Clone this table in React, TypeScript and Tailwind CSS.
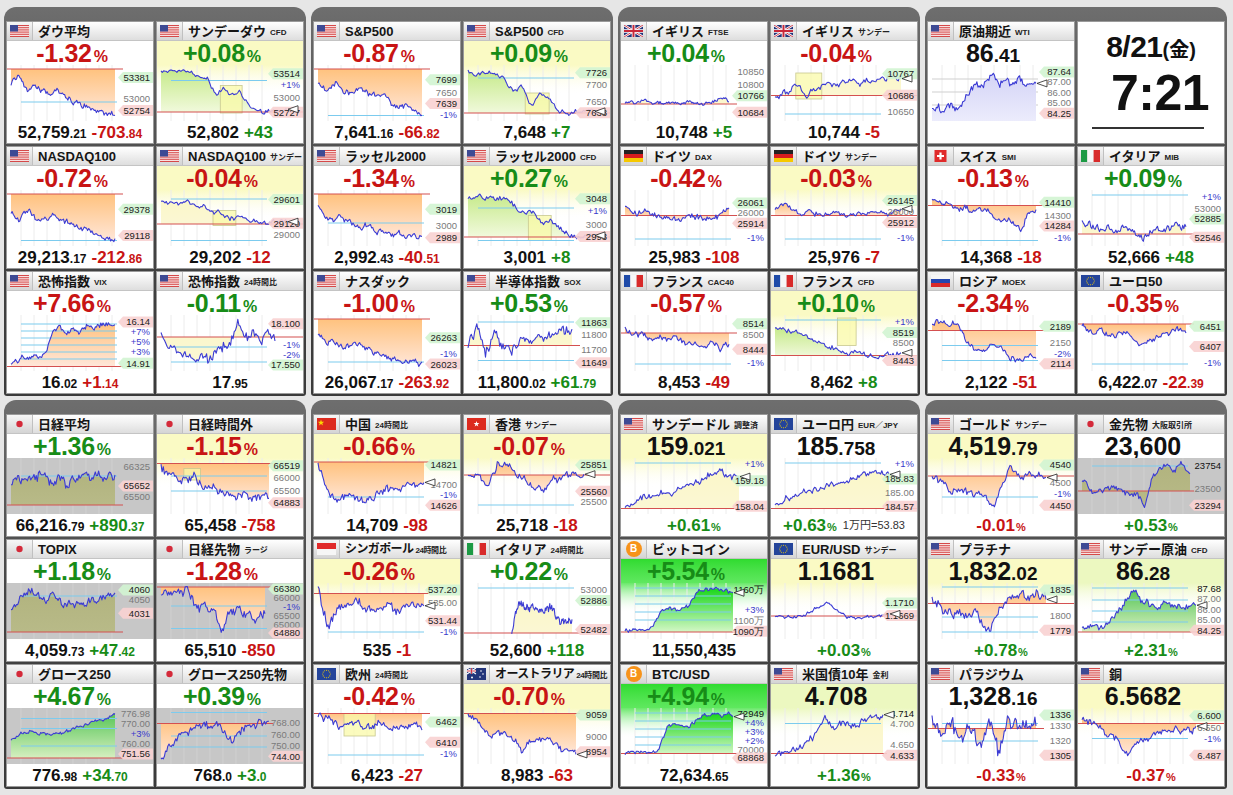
import React from 'react';

type Lab = [string, number, string];
interface C {
  f: string; t: string; s?: string; tn?: boolean;
  pct?: [string, string];
  val?: [string, string?];
  bv?: [string, string?];
  bc?: [string, string?, string?];
  bp?: [string, string];
  bx?: string;
  hdr?: string; gray?: boolean;
  k: number[]; nz?: number; xs?: number; xe?: number; ref: number; noref?: boolean;
  fill: string; cy?: number[]; hg?: number[]; lab: Lab[]; arrow?: boolean; box?: number[];
  clock?: boolean;
}

const TXT: Record<string, string> = { r: 'text-[#c81414]', g: 'text-[#178c17]' };
const HDR: Record<string, string> = {
  w: 'bg-white',
  y: 'bg-[#fafac4]',
  G: 'bg-linear-to-b from-[#2fdc2f] to-[#5fe85f]',
  lg: 'bg-[#ecf8c0]',
};
const HDRC: Record<string, string> = { y: '#fafac4', G: '#6ae86a', lg: '#ecf8c0' };

function rng(seed: number) {
  let a = seed;
  return () => {
    a |= 0; a = (a + 0x6d2b79f5) | 0;
    let t = Math.imul(a ^ (a >>> 15), 1 | a);
    t = (t + Math.imul(t ^ (t >>> 7), 61 | t)) ^ t;
    return ((t ^ (t >>> 14)) >>> 0) / 4294967296;
  };
}

function series(k: number[], seed: number, nz: number, n = 96) {
  const r = rng(seed);
  const out: number[] = [];
  let drift = 0;
  for (let i = 0; i < n; i++) {
    const p = (i / (n - 1)) * (k.length - 1);
    const j = Math.min(Math.floor(p), k.length - 2);
    const f = p - j;
    const base = k[j] + (k[j + 1] - k[j]) * f;
    drift = drift * 0.55 + (r() - 0.5) * nz;
    out.push(Math.max(0.01, Math.min(0.99, base + drift + (r() - 0.5) * nz * 0.7)));
  }
  return out;
}

const FILLS: Record<string, [string, string]> = {
  o: ['#ffc27e', '#ffe7da'],
  g: ['#c6ea8a', '#f3fae0'],
  y: ['#fbf7c8', '#fbf7d4'],
  b: ['#d4d4f6', '#ececfc'],
  G: ['#58c658', '#d6efc0'],
  BG: ['#14d614', '#d6f7c8'],
  gy: ['#b1b37e', '#b8ba88'],
};

const LABC: Record<string, string> = { h: '#222', l: '#222', n: '#7a7a7a', p: '#3a3acc', k: '#111' };

// keep the price tags on the right from piling on top of each other
function spread(lab: Lab[]) {
  const L = lab.map(([t, f, k]) => ({ t, k, y: 6 + f * 44 })).sort((a, b) => a.y - b.y);
  const step = L.length > 1 ? Math.min(10, 44 / (L.length - 1)) : 10;
  for (let i = 1; i < L.length; i++) if (L[i].y - L[i - 1].y < step) L[i].y = L[i - 1].y + step;
  if (L.length && L[L.length - 1].y > 50) {
    L[L.length - 1].y = 50;
    for (let i = L.length - 2; i >= 0; i--) if (L[i + 1].y - L[i].y < step) L[i].y = L[i + 1].y - step;
  }
  return L;
}

function Chart({ c, id }: { c: C; id: number }) {
  const W = 146, H = 56;
  const pts = series(c.k, id * 7919 + 13, c.nz ?? 0.08);
  const xs = 4 + (c.xs ?? 0) * 104;
  const xe = c.xe ?? 108;
  const Y = (f: number) => 3 + f * 50;
  const P = pts.map((f, i) => [xs + ((xe - xs) * i) / (pts.length - 1), Y(f)]);
  const d = P.map((p, i) => (i ? 'L' : 'M') + p[0].toFixed(1) + ',' + p[1].toFixed(1)).join('');
  const ry = c.noref ? H : Y(c.ref);
  const area = d + `L${xe},${ry}L${xs},${ry}Z`;
  const last = P[P.length - 1];
  const fc = FILLS[c.fill];
  const grid: number[] = [];
  for (let x = 14; x <= 108; x += 13) grid.push(x);
  const redEnd = xe > 112 ? W : 116;
  const labs = spread(c.lab);
  return (
    <svg width={W} height={H} className="block shrink-0">
      <defs>
        <linearGradient id={`f${id}`} x1="0" y1="0" x2="0" y2="1">
          <stop offset="0" stopColor={fc ? fc[0] : '#fff'} />
          <stop offset="1" stopColor={fc ? fc[1] : '#fff'} />
        </linearGradient>
        <linearGradient id={`h${id}`} x1="0" y1="0" x2="0" y2="1">
          <stop offset="0" stopColor={HDRC[c.hdr ?? 'w'] ?? '#fff'} />
          <stop offset="1" stopColor="#fff" stopOpacity="0" />
        </linearGradient>
      </defs>
      {c.gray && <rect width={W} height={H} fill="#c7c7c7" />}
      {!c.gray && c.hdr && c.hdr !== 'w' && <rect width={W} height={30} fill={`url(#h${id})`} />}
      {grid.map((x) => (
        <line key={x} x1={x} x2={x} y1={0} y2={H} stroke={c.gray ? '#d0d0d0' : '#ececec'} strokeWidth={1} />
      ))}
      {(c.hg ?? []).map((f, i) => (
        <line key={i} x1={4} x2={110} y1={Y(f)} y2={Y(f)} stroke="#cfcfcf" strokeWidth={1} />
      ))}
      {c.fill !== 'n' && <path d={area} fill={`url(#f${id})`} />}
      {c.box && (
        <rect
          x={4 + c.box[0] * 104}
          y={Y(c.box[1])}
          width={(c.box[2] - c.box[0]) * 104}
          height={(c.box[3] - c.box[1]) * 50}
          fill="#fafaa8"
          fillOpacity={0.75}
          stroke="#c8c890"
          strokeWidth={0.8}
        />
      )}
      {(c.cy ?? []).map((f, i) => (
        <line key={i} x1={14} x2={110} y1={Y(f)} y2={Y(f)} stroke="#7ccbee" strokeWidth={1.2} />
      ))}
      {!c.noref && <line x1={0} x2={redEnd} y1={ry} y2={ry} stroke="#d45050" strokeWidth={1.2} />}
      <path d={d} fill="none" stroke="#3b3bd4" strokeWidth={1.1} strokeLinejoin="round" />
      {labs.map(({ t, k, y }, i) => (
        <g key={i}>
          {(k === 'h' || k === 'l') && (
            <path
              d={`M111,${y}L116,${y - 5.5}H146V${y + 5.5}H116Z`}
              fill={k === 'h' ? '#d2f4d2' : '#f8d2d2'}
              fillOpacity={0.9}
            />
          )}
          <text x={143} y={y + 3.4} textAnchor="end" fontSize={9.5} fontFamily="'Liberation Sans', sans-serif" fill={LABC[k]}>
            {t}
          </text>
        </g>
      ))}
      {c.arrow && (
        <path d={`M${last[0] + 1},${last[1]}L${last[0] + 11},${last[1] - 3.5}V${last[1] + 3.5}Z`} fill="#fff" stroke="#222" strokeWidth={0.8} />
      )}
    </svg>
  );
}

function Flag({ f }: { f: string }) {
  const s = { width: 19, height: 12 };
  if (f === 'us')
    return (
      <svg {...s} viewBox="0 0 19 12">
        <rect width="19" height="12" fill="#fff" />
        {[0, 2, 4, 6, 8, 10, 12].map((r) => (
          <rect key={r} y={(r * 12) / 13} width="19" height={12 / 13} fill="#d23a3a" />
        ))}
        <rect width="8" height="6.5" fill="#3e4a94" />
      </svg>
    );
  if (f === 'jp')
    return (
      <svg {...s} viewBox="0 0 19 12">
        <circle cx="9.5" cy="6" r="3.2" fill="#d42a3a" />
      </svg>
    );
  if (f === 'uk')
    return (
      <svg {...s} viewBox="0 0 19 12">
        <rect width="19" height="12" fill="#23357a" />
        <path d="M0,0L19,12M19,0L0,12" stroke="#fff" strokeWidth="2.4" />
        <path d="M0,0L19,12M19,0L0,12" stroke="#c8283a" strokeWidth="0.9" />
        <path d="M9.5,0V12M0,6H19" stroke="#fff" strokeWidth="3.6" />
        <path d="M9.5,0V12M0,6H19" stroke="#c8283a" strokeWidth="2" />
      </svg>
    );
  if (f === 'de')
    return (
      <svg {...s} viewBox="0 0 19 12">
        <rect width="19" height="4" fill="#222" />
        <rect y="4" width="19" height="4" fill="#d81e1e" />
        <rect y="8" width="19" height="4" fill="#f6c800" />
      </svg>
    );
  if (f === 'fr' || f === 'it')
    return (
      <svg {...s} viewBox="0 0 19 12">
        <rect width="6.4" height="12" fill={f === 'fr' ? '#1e4aa8' : '#1c9a44'} />
        <rect x="6.3" width="6.4" height="12" fill="#f6f6f6" />
        <rect x="12.6" width="6.4" height="12" fill="#d82a2a" />
      </svg>
    );
  if (f === 'ru')
    return (
      <svg {...s} viewBox="0 0 19 12">
        <rect width="19" height="4" fill="#f6f6f6" />
        <rect y="4" width="19" height="4" fill="#2446b0" />
        <rect y="8" width="19" height="4" fill="#d82a2a" />
      </svg>
    );
  if (f === 'ch')
    return (
      <svg {...s} viewBox="0 0 19 12">
        <rect x="3.5" width="12" height="12" fill="#e02a2a" />
        <path d="M9.5,2.5V9.5M6,6H13" stroke="#fff" strokeWidth="2.2" />
      </svg>
    );
  if (f === 'eu')
    return (
      <svg {...s} viewBox="0 0 19 12">
        <rect width="19" height="12" fill="#24449a" />
        {Array.from({ length: 12 }).map((_, i) => (
          <circle key={i} cx={9.5 + 3.8 * Math.cos((i * Math.PI) / 6)} cy={6 + 3.8 * Math.sin((i * Math.PI) / 6)} r="0.55" fill="#f6d000" />
        ))}
      </svg>
    );
  if (f === 'cn')
    return (
      <svg {...s} viewBox="0 0 19 12">
        <rect width="19" height="12" fill="#dc2a1e" />
        <path d="M4,1.5L4.8,3.8H7.2L5.3,5.2L6,7.5L4,6.1L2,7.5L2.7,5.2L0.8,3.8H3.2Z" fill="#fcd800" />
      </svg>
    );
  if (f === 'hk')
    return (
      <svg {...s} viewBox="0 0 19 12">
        <rect width="19" height="12" fill="#dc2a1e" />
        <path d="M9.5,3L10.2,5.1H12.4L10.6,6.4L11.3,8.5L9.5,7.2L7.7,8.5L8.4,6.4L6.6,5.1H8.8Z" fill="#fff" />
      </svg>
    );
  if (f === 'sg')
    return (
      <svg {...s} viewBox="0 0 19 12">
        <rect width="19" height="6" fill="#e02a2a" />
        <rect y="6" width="19" height="6" fill="#f6f6f6" />
      </svg>
    );
  if (f === 'au')
    return (
      <svg {...s} viewBox="0 0 19 12">
        <rect width="19" height="12" fill="#23357a" />
        <path d="M0,0L9,6M9,0L0,6" stroke="#fff" strokeWidth="1.2" />
        <path d="M4.5,0V6M0,3H9" stroke="#fff" strokeWidth="1.8" />
        <path d="M4.5,0V6M0,3H9" stroke="#c8283a" strokeWidth="0.9" />
        <circle cx="14" cy="3" r="0.8" fill="#fff" />
        <circle cx="16" cy="6" r="0.8" fill="#fff" />
        <circle cx="13" cy="9" r="0.8" fill="#fff" />
        <circle cx="5" cy="9.5" r="1" fill="#fff" />
      </svg>
    );
  if (f === 'btc')
    return (
      <span className="w-[16px] h-[16px] rounded-full bg-[#f7931a] flex items-center justify-center text-white text-[10px] font-bold leading-none">
        B
      </span>
    );
  return null;
}

function Card({ c, id }: { c: C; id: number }) {
  if (c.clock) {
    return (
      <div className="h-[123px] bg-white border border-[#9a9a9a] flex flex-col items-center">
        <div className="pt-[10px] flex items-end leading-none text-[#111] font-bold">
          <span className="text-[30px] tracking-[-0.5px]">8/21</span>
          <span className="text-[20px] mb-[2px]">(金)</span>
        </div>
        <div className="mt-[6px] ml-[18px] text-[50px] font-bold leading-none text-[#111] tracking-[-0.5px]">7:21</div>
        <div className="mt-[9px] w-[112px] h-[2px] bg-[#333] mr-[6px]" />
      </div>
    );
  }
  return (
    <div className="h-[123px] bg-white border border-[#9a9a9a] flex flex-col overflow-hidden">
      <div className="h-[19px] flex items-center bg-linear-to-b from-white to-[#dedede] border-b border-[#c4c4c4] shrink-0 overflow-hidden">
        <div className="w-[26px] h-full shrink-0 flex items-center justify-center bg-linear-to-b from-[#f6f6f6] to-[#d4d4d4] border-r border-[#c0c0c0]">
          <Flag f={c.f} />
        </div>
        <span
          className={`ml-[5px] font-bold text-[#151515] leading-none whitespace-nowrap ${c.tn ? 'text-[12px] tracking-[-0.6px]' : 'text-[13px]'}`}
        >
          {c.t}
        </span>
        {c.s && (
          <span className={`mt-[3px] text-[8px] font-bold text-[#222] leading-none whitespace-nowrap ${c.tn ? 'ml-[2px] tracking-[-0.4px]' : 'ml-[4px]'}`}>
            {c.s}
          </span>
        )}
      </div>
      <div className={`h-[24px] flex items-center justify-center pr-[16px] leading-none shrink-0 ${HDR[c.hdr ?? 'w']}`}>
        {c.pct && (
          <span className={TXT[c.pct[1]]}>
            <span className="text-[25px] font-bold tracking-[-0.3px]">{c.pct[0]}</span>
            <span className="text-[16px] font-bold ml-[2px]">%</span>
          </span>
        )}
        {c.val && (
          <span className="text-[#111] font-bold">
            <span className="text-[25px]">{c.val[0]}</span>
            {c.val[1] && <span className="text-[19px]">{c.val[1]}</span>}
          </span>
        )}
      </div>
      <Chart c={c} id={id} />
      <div className="h-[22px] flex items-center justify-center leading-none font-bold whitespace-nowrap">
        {c.bv && (
          <span className="text-[#111]">
            <span className="text-[17px]">{c.bv[0]}</span>
            {c.bv[1] && <span className="text-[12px]">{c.bv[1]}</span>}
          </span>
        )}
        {c.bc && (
          <span className={`ml-[5px] ${TXT[c.bc[2] ?? 'r']}`}>
            <span className="text-[17px]">{c.bc[0]}</span>
            {c.bc[1] && <span className="text-[12px]">{c.bc[1]}</span>}
          </span>
        )}
        {c.bp && (
          <span className={TXT[c.bp[1]]}>
            <span className="text-[17px]">{c.bp[0]}</span>
            <span className="text-[11px] ml-[1px]">%</span>
          </span>
        )}
        {c.bx && <span className="ml-[6px] text-[11px] font-normal text-[#333]">{c.bx}</span>}
      </div>
    </div>
  );
}

const CLOCK: C = { f: '', t: '', k: [0, 0], ref: 0, fill: 'n', lab: [], clock: true };

const groups: C[][] = [
  [
    { f: 'us', t: 'ダウ平均', pct: ['-1.32', 'r'], bv: ['52,759', '.21'], bc: ['-703', '.84', 'r'], ref: 0.02, k: [0.35, 0.15, 0.5, 0.4, 0.48, 0.5, 0.45, 0.6, 0.68, 0.75, 0.8, 0.85, 0.9, 0.92], cy: [0.68], fill: 'o', lab: [['53381', 0.15, 'h'], ['53000', 0.62, 'n'], ['52754', 0.9, 'l']] },
    { f: 'us', t: 'サンデーダウ', s: 'CFD', hdr: 'y', pct: ['+0.08', 'g'], bv: ['52,802'], bc: ['+43', '', 'g'], ref: 0.88, k: [0.05, 0.07, 0.06, 0.05, 0.1, 0.15, 0.2, 0.55, 0.35, 0.55, 0.45, 0.7, 0.85, 0.9, 0.85, 0.86, 0.84], nz: 0.06, xe: 130, arrow: true, cy: [0.25], fill: 'g', box: [0.57, 0.35, 0.78, 0.9], lab: [['53514', 0.06, 'h'], ['+1%', 0.3, 'p'], ['53000', 0.6, 'n'], ['52727', 0.94, 'l']] },
    { f: 'us', t: 'NASDAQ100', pct: ['-0.72', 'r'], bv: ['29,213', '.17'], bc: ['-212', '.86', 'r'], ref: 0.02, k: [0.4, 0.5, 0.35, 0.55, 0.5, 0.45, 0.55, 0.6, 0.7, 0.75, 0.85, 0.95, 0.9], cy: [0.95], fill: 'o', lab: [['29378', 0.3, 'h'], ['29118', 0.9, 'l']] },
    { f: 'us', t: 'NASDAQ100', s: 'サンデー', hdr: 'y', pct: ['-0.04', 'r'], bv: ['29,202'], bc: ['-12', '', 'r'], ref: 0.62, k: [0.15, 0.2, 0.2, 0.25, 0.3, 0.4, 0.5, 0.45, 0.55, 0.6, 0.6, 0.58], nz: 0.07, xe: 130, arrow: true, cy: [0.12, 0.95], fill: 'y', box: [0.5, 0.35, 0.72, 0.65], lab: [['29601', 0.08, 'h'], ['29120', 0.62, 'l'], ['29000', 0.88, 'n']] },
    { f: 'us', t: '恐怖指数', s: 'VIX', pct: ['+7.66', 'r'], bv: ['16', '.02'], bc: ['+1', '.14', 'r'], ref: 0.97, k: [0.95, 0.85, 0.75, 0.78, 0.78, 0.72, 0.3, 0.15, 0.35, 0.2, 0.3, 0.15, 0.25, 0.15, 0.1, 0.12], cy: [0.12, 0.26, 0.4, 0.54, 0.68, 0.82], fill: 'o', lab: [['16.14', 0.02, 'l'], ['+7%', 0.24, 'p'], ['+5%', 0.46, 'p'], ['+3%', 0.68, 'p'], ['14.91', 0.96, 'h']] },
    { f: 'us', t: '恐怖指数', s: '24時間比', pct: ['-0.11', 'g'], bv: ['17', '.95'], ref: 0.38, k: [0.35, 0.45, 0.6, 0.7, 0.8, 0.85, 0.85, 0.88, 0.6, 0.55, 0.45, 0.1, 0.4, 0.3, 0.45, 0.35, 0.4], nz: 0.16, xe: 118, cy: [0.58, 0.88], fill: 'y', lab: [['18.100', 0.06, 'l'], ['-1%', 0.56, 'p'], ['-2%', 0.8, 'p'], ['17.550', 0.99, 'h']] },
  ],
  [
    { f: 'us', t: 'S&P500', pct: ['-0.87', 'r'], bv: ['7,641', '.16'], bc: ['-66', '.82', 'r'], ref: 0.02, k: [0.35, 0.45, 0.3, 0.45, 0.5, 0.4, 0.55, 0.5, 0.6, 0.8, 0.78, 0.85, 0.95], cy: [0.95], fill: 'o', lab: [['7699', 0.2, 'h'], ['7650', 0.5, 'n'], ['7639', 0.74, 'l'], ['-1%', 0.98, 'p']] },
    { f: 'us', t: 'S&P500', s: 'CFD', hdr: 'y', pct: ['+0.09', 'g'], bv: ['7,648'], bc: ['+7', '', 'g'], ref: 0.9, k: [0.1, 0.1, 0.12, 0.1, 0.2, 0.45, 0.35, 0.75, 0.5, 0.65, 0.85, 0.9, 0.88, 0.85, 0.86], nz: 0.07, xe: 130, arrow: true, cy: [0.2], fill: 'g', box: [0.55, 0.5, 0.78, 0.92], lab: [['7726', 0.04, 'h'], ['7700', 0.3, 'n'], ['7650', 0.7, 'n'], ['7638', 0.95, 'l']] },
    { f: 'us', t: 'ラッセル2000', pct: ['-1.34', 'r'], bv: ['2,992', '.43'], bc: ['-40', '.51', 'r'], ref: 0.02, k: [0.3, 0.5, 0.55, 0.45, 0.6, 0.7, 0.65, 0.75, 0.8, 0.85, 0.8, 0.9, 0.85, 0.88], cy: [0.6], fill: 'o', lab: [['3019', 0.3, 'h'], ['3000', 0.68, 'n'], ['2989', 0.95, 'l']] },
    { f: 'us', t: 'ラッセル2000', s: 'CFD', hdr: 'y', pct: ['+0.27', 'g'], bv: ['3,001'], bc: ['+8', '', 'g'], ref: 0.88, k: [0.1, 0.08, 0.1, 0.12, 0.15, 0.4, 0.35, 0.6, 0.55, 0.75, 0.88, 0.85, 0.86], nz: 0.07, xe: 130, arrow: true, cy: [0.3, 0.95], fill: 'g', box: [0.58, 0.45, 0.8, 0.95], lab: [['3048', 0.06, 'h'], ['+1%', 0.34, 'p'], ['3000', 0.66, 'n'], ['2993', 0.92, 'l']] },
    { f: 'us', t: 'ナスダック', pct: ['-1.00', 'r'], bv: ['26,067', '.17'], bc: ['-263', '.92', 'r'], ref: 0.02, k: [0.35, 0.5, 0.45, 0.6, 0.55, 0.5, 0.65, 0.7, 0.8, 0.85, 0.9, 0.88, 0.92], cy: [0.88], fill: 'o', lab: [['26263', 0.38, 'h'], ['-1%', 0.74, 'p'], ['26023', 0.98, 'l']] },
    { f: 'us', t: '半導体指数', s: 'SOX', pct: ['+0.53', 'g'], bv: ['11,800', '.02'], bc: ['+61', '.79', 'g'], ref: 0.55, k: [0.5, 0.2, 0.75, 0.3, 0.55, 0.6, 0.5, 0.45, 0.35, 0.4, 0.3, 0.2, 0.25], nz: 0.16, cy: [0.08, 0.85], fill: 'y', lab: [['11863', 0.04, 'h'], ['11800', 0.3, 'n'], ['11700', 0.64, 'n'], ['11649', 0.95, 'l']] },
  ],
  [
    { f: 'uk', t: 'イギリス', s: 'FTSE', pct: ['+0.04', 'g'], bv: ['10,748'], bc: ['+5', '', 'g'], ref: 0.72, k: [0.68, 0.7, 0.66, 0.7, 0.72, 0.7, 0.7, 0.66, 0.72, 0.7, 0.62, 0.66], nz: 0.05, fill: 'y', lab: [['10850', 0.02, 'n'], ['10800', 0.3, 'n'], ['10766', 0.56, 'h'], ['10684', 0.94, 'l']] },
    { f: 'uk', t: 'イギリス', s: 'サンデー', pct: ['-0.04', 'r'], bv: ['10,744'], bc: ['-5', '', 'r'], ref: 0.55, k: [0.6, 0.5, 0.35, 0.6, 0.4, 0.3, 0.35, 0.25, 0.3, 0.28, 0.25, 0.2, 0.22], nz: 0.1, xe: 130, arrow: true, box: [0.2, 0.1, 0.45, 0.62], fill: 'y', cy: [0.92], lab: [['10767', 0.06, 'h'], ['10686', 0.55, 'l'], ['10650', 0.92, 'n']] },
    { f: 'de', t: 'ドイツ', s: 'DAX', pct: ['-0.42', 'r'], bv: ['25,983'], bc: ['-108', '', 'r'], ref: 0.45, k: [0.3, 0.4, 0.35, 0.45, 0.5, 0.48, 0.52, 0.45, 0.5, 0.55, 0.45, 0.3], nz: 0.09, cy: [0.92], fill: 'o', lab: [['26061', 0.16, 'h'], ['26000', 0.38, 'n'], ['25914', 0.62, 'l'], ['-1%', 0.94, 'p']] },
    { f: 'de', t: 'ドイツ', s: 'サンデー', hdr: 'y', pct: ['-0.03', 'r'], bv: ['25,976'], bc: ['-7', '', 'r'], ref: 0.45, k: [0.3, 0.2, 0.4, 0.35, 0.45, 0.4, 0.45, 0.42, 0.4, 0.38, 0.4, 0.35], nz: 0.08, xe: 130, arrow: true, cy: [0.92], fill: 'o', lab: [['26145', 0.1, 'h'], ['26000', 0.36, 'n'], ['25912', 0.6, 'l'], ['-1%', 0.94, 'p']] },
    { f: 'fr', t: 'フランス', s: 'CAC40', pct: ['-0.57', 'r'], bv: ['8,453'], bc: ['-49', '', 'r'], ref: 0.3, k: [0.25, 0.35, 0.3, 0.4, 0.35, 0.45, 0.35, 0.5, 0.45, 0.55, 0.5, 0.6, 0.55], nz: 0.09, cy: [0.92], fill: 'o', lab: [['8514', 0.06, 'h'], ['8500', 0.3, 'n'], ['8444', 0.64, 'l'], ['-1%', 0.94, 'p']] },
    { f: 'fr', t: 'フランス', s: 'CFD', hdr: 'y', pct: ['+0.10', 'g'], bv: ['8,462'], bc: ['+8', '', 'g'], ref: 0.75, k: [0.2, 0.25, 0.3, 0.4, 0.45, 0.55, 0.6, 0.7, 0.65, 0.75, 0.8, 0.72, 0.75], nz: 0.08, xe: 130, arrow: true, cy: [0.04], fill: 'g', box: [0.6, 0.0, 0.78, 0.55], lab: [['+1%', 0.02, 'p'], ['8519', 0.26, 'h'], ['8500', 0.5, 'n'], ['8443', 0.9, 'l']] },
  ],
  [
    { f: 'us', t: '原油期近', s: 'WTI', val: ['86', '.41'], ref: 1, noref: true, k: [0.85, 0.8, 0.82, 0.78, 0.8, 0.75, 0.5, 0.3, 0.4, 0.2, 0.1, 0.3, 0.25, 0.35, 0.2, 0.3, 0.3, 0.35], nz: 0.1, arrow: true, hg: [0.22, 0.48, 0.74], fill: 'b', lab: [['87.64', 0.02, 'h'], ['87.00', 0.24, 'n'], ['86.00', 0.48, 'n'], ['85.00', 0.72, 'n'], ['84.25', 0.96, 'l']] },
    CLOCK,
    { f: 'ch', t: 'スイス', s: 'SMI', pct: ['-0.13', 'r'], bv: ['14,368'], bc: ['-18', '', 'r'], ref: 0.25, k: [0.1, 0.2, 0.25, 0.35, 0.3, 0.35, 0.3, 0.35, 0.55, 0.5, 0.55, 0.75, 0.4, 0.3], nz: 0.08, cy: [0.95], fill: 'o', lab: [['14410', 0.14, 'h'], ['14300', 0.44, 'n'], ['14284', 0.68, 'l'], ['-1%', 0.94, 'p']] },
    { f: 'it', t: 'イタリア', s: 'MIB', pct: ['+0.09', 'g'], bv: ['52,666'], bc: ['+48', '', 'g'], ref: 0.82, k: [0.6, 0.65, 0.7, 0.72, 0.75, 0.7, 0.8, 0.9, 0.75, 0.7, 0.72, 0.68, 0.7], nz: 0.1, cy: [0.04], fill: 'y', lab: [['+1%', 0.02, 'p'], ['53000', 0.28, 'n'], ['52885', 0.52, 'h'], ['52546', 0.94, 'l']] },
    { f: 'ru', t: 'ロシア', s: 'MOEX', pct: ['-2.34', 'r'], bv: ['2,122'], bc: ['-51', '', 'r'], ref: 0.25, k: [0.1, 0.05, 0.1, 0.15, 0.5, 0.65, 0.6, 0.55, 0.6, 0.8, 0.85, 0.75, 0.8], nz: 0.08, cy: [0.55, 0.85], fill: 'o', lab: [['2189', 0.12, 'h'], ['2150', 0.5, 'n'], ['-2%', 0.74, 'p'], ['2114', 0.97, 'l']] },
    { f: 'eu', t: 'ユーロ50', pct: ['-0.35', 'r'], bv: ['6,422', '.07'], bc: ['-22', '.39', 'r'], ref: 0.12, k: [0.15, 0.3, 0.25, 0.35, 0.3, 0.3, 0.55, 0.45, 0.4, 0.35, 0.2, 0.3], nz: 0.08, cy: [0.92], fill: 'o', lab: [['6451', 0.12, 'h'], ['6407', 0.58, 'l'], ['-1%', 0.94, 'p']] },
  ],
  [
    { f: 'jp', t: '日経平均', gray: true, pct: ['+1.36', 'g'], bv: ['66,216', '.79'], bc: ['+890', '.37', 'g'], ref: 0.88, k: [0.4, 0.3, 0.45, 0.35, 0.3, 0.4, 0.3, 0.45, 0.35, 0.25, 0.3, 0.2, 0.3, 0.25], nz: 0.15, cy: [0.3], fill: 'gy', lab: [['66325', 0.06, 'n'], ['65652', 0.5, 'l'], ['65500', 0.74, 'n']] },
    { f: 'jp', t: '日経時間外', hdr: 'y', pct: ['-1.15', 'r'], bv: ['65,458'], bc: ['-758', '', 'r'], ref: 0.05, k: [0.1, 0.3, 0.4, 0.35, 0.3, 0.55, 0.5, 0.6, 0.65, 0.75, 0.65, 0.7, 0.72, 0.7], nz: 0.12, xe: 112, cy: [0.3, 0.6], fill: 'o', box: [0.22, 0.15, 0.38, 0.38], lab: [['66519', 0.04, 'h'], ['66000', 0.3, 'n'], ['65500', 0.6, 'n'], ['64883', 0.88, 'l']] },
    { f: 'jp', t: 'TOPIX', gray: true, pct: ['+1.18', 'g'], bv: ['4,059', '.73'], bc: ['+47', '.42', 'g'], ref: 0.92, k: [0.5, 0.25, 0.1, 0.2, 0.3, 0.15, 0.4, 0.35, 0.4, 0.3, 0.25, 0.2, 0.15], nz: 0.1, cy: [0.2], fill: 'gy', lab: [['4060', 0.02, 'h'], ['4050', 0.24, 'n'], ['4031', 0.55, 'l']] },
    { f: 'jp', t: '日経先物', s: 'ラージ', gray: true, pct: ['-1.28', 'r'], bv: ['65,510'], bc: ['-850', '', 'r'], ref: 0.02, k: [0.1, 0.2, 0.15, 0.05, 0.35, 0.4, 0.5, 0.9, 0.45, 0.5, 0.55, 0.6, 0.55], nz: 0.15, cy: [0.4, 0.85], fill: 'o', lab: [['66380', 0.0, 'h'], ['66000', 0.2, 'n'], ['-1%', 0.4, 'p'], ['65500', 0.6, 'n'], ['65000', 0.8, 'n'], ['64880', 1, 'l']] },
    { f: 'jp', t: 'グロース250', gray: true, pct: ['+4.67', 'g'], bv: ['776', '.98'], bc: ['+34', '.70', 'g'], ref: 0.94, k: [0.6, 0.45, 0.4, 0.45, 0.45, 0.45, 0.4, 0.3, 0.25, 0.2, 0.15, 0.05], nz: 0.05, cy: [0.15, 0.35, 0.7], fill: 'G', lab: [['776.98', 0.0, 'n'], ['770.00', 0.2, 'n'], ['+3%', 0.4, 'p'], ['760.00', 0.6, 'n'], ['751.56', 0.82, 'l']] },
    { f: 'jp', t: 'グロース250先物', gray: true, pct: ['+0.39', 'g'], bv: ['768', '.0'], bc: ['+3', '.0', 'g'], ref: 0.25, k: [0.95, 0.7, 0.5, 0.35, 0.3, 0.3, 0.3, 0.6, 0.4, 0.3, 0.25, 0.2], nz: 0.12, xe: 112, cy: [0.03, 0.5, 0.72], fill: 'o', lab: [['768.00', 0.2, 'n'], ['760.00', 0.46, 'n'], ['750.00', 0.72, 'n'], ['744.00', 0.96, 'l']] },
  ],
  [
    { f: 'cn', t: '中国', s: '24時間比', hdr: 'y', pct: ['-0.66', 'r'], bv: ['14,709'], bc: ['-98', '', 'r'], ref: 0.02, k: [0.05, 0.6, 0.8, 0.7, 0.75, 0.8, 0.7, 0.6, 0.55, 0.5, 0.45, 0.45], nz: 0.12, xe: 110, arrow: true, cy: [0.72], fill: 'o', lab: [['14821', 0.02, 'h'], ['14700', 0.46, 'n'], ['-1%', 0.7, 'p'], ['14626', 0.94, 'l']] },
    { f: 'hk', t: '香港', s: 'サンデー', hdr: 'y', pct: ['-0.07', 'r'], bv: ['25,718'], bc: ['-18', '', 'r'], ref: 0.28, k: [0.3, 0.2, 0.5, 0.1, 0.05, 0.3, 0.4, 0.6, 0.5, 0.35, 0.3, 0.28, 0.28], nz: 0.12, xe: 120, arrow: true, cy: [0.88], fill: 'o', lab: [['25851', 0.02, 'h'], ['25560', 0.62, 'l'], ['25500', 0.86, 'n']] },
    { f: 'sg', t: 'シンガポール', s: '24時間比', tn: true, hdr: 'y', pct: ['-0.26', 'r'], bv: ['535'], bc: ['-1', '', 'r'], ref: 0.15, k: [0.0, 0.85, 0.5, 0.4, 0.3, 0.45, 0.6, 0.4, 0.5, 0.45, 0.4, 0.35], nz: 0.15, xe: 110, arrow: true, cy: [0.92], fill: 'o', lab: [['537.20', 0.02, 'h'], ['535.00', 0.3, 'n'], ['531.44', 0.72, 'l'], ['-1%', 0.96, 'p']] },
    { f: 'it', t: 'イタリア', s: '24時間比', pct: ['+0.22', 'g'], bv: ['52,600'], bc: ['+118', '', 'g'], ref: 0.94, xs: 0.42, k: [0.92, 0.3, 0.45, 0.4, 0.55, 0.5, 0.45, 0.7, 0.75, 0.65], nz: 0.12, cy: [0.04], fill: 'y', lab: [['53000', 0.02, 'n'], ['52886', 0.26, 'h'], ['52482', 0.92, 'l']] },
    { f: 'eu', t: '欧州', s: '24時間比', pct: ['-0.42', 'r'], bv: ['6,423'], bc: ['-27', '', 'r'], ref: 0.05, k: [0.1, 0.15, 0.3, 0.2, 0.25, 0.3, 0.2, 0.35, 0.3, 0.25, 0.3], nz: 0.1, cy: [0.88], fill: 'o', box: [0.25, 0.05, 0.55, 0.5], lab: [['6462', 0.18, 'h'], ['6410', 0.64, 'l'], ['-1%', 0.9, 'p']] },
    { f: 'au', t: 'オーストラリア', s: '24時間比', tn: true, hdr: 'y', pct: ['-0.70', 'r'], bv: ['8,983'], bc: ['-63', '', 'r'], ref: 0.05, k: [0.05, 0.2, 0.5, 0.45, 0.55, 0.75, 0.6, 0.55, 0.65, 0.8, 0.85], nz: 0.1, xe: 112, arrow: true, fill: 'o', lab: [['9059', 0.02, 'h'], ['9000', 0.52, 'n'], ['8954', 0.86, 'l']] },
  ],
  [
    { f: 'us', t: 'サンデードル', s: '調整済', hdr: 'y', val: ['159', '.021'], bp: ['+0.61', 'g'], ref: 0.95, k: [0.95, 0.85, 0.7, 0.75, 0.6, 0.7, 0.6, 0.5, 0.45, 0.35, 0.25, 0.25, 0.28, 0.35], nz: 0.1, xe: 118, arrow: true, cy: [0.04], fill: 'y', lab: [['+1%', 0.0, 'p'], ['159.18', 0.38, 'h'], ['158.04', 0.96, 'l']] },
    { f: 'eu', t: 'ユーロ円', s: 'EUR／JPY', val: ['185', '.758'], bp: ['+0.63', 'g'], bx: '1万円=53.83', ref: 0.95, k: [0.9, 0.75, 0.7, 0.6, 0.55, 0.5, 0.45, 0.4, 0.3, 0.25, 0.2, 0.25], nz: 0.08, xe: 118, arrow: true, cy: [0.04], fill: 'y', lab: [['+1%', 0.0, 'p'], ['185.83', 0.34, 'h'], ['185.00', 0.66, 'n'], ['184.57', 0.96, 'l']] },
    { f: 'btc', t: 'ビットコイン', hdr: 'G', pct: ['+5.54', 'g'], bv: ['11,550,435'], ref: 0.92, k: [0.9, 0.85, 0.88, 0.8, 0.5, 0.45, 0.48, 0.4, 0.1, 0.08, 0.05, 0.1, 0.12], nz: 0.06, xe: 112, arrow: true, cy: [0.04, 0.2, 0.36, 0.52, 0.68], fill: 'BG', lab: [['1160万', 0.02, 'k'], ['+3%', 0.46, 'p'], ['1100万', 0.72, 'n'], ['1090万', 0.96, 'l']] },
    { f: 'eu', t: 'EUR/USD', s: 'サンデー', hdr: 'y', val: ['1.1681'], bp: ['+0.03', 'g'], ref: 0.6, k: [0.6, 0.62, 0.6, 0.58, 0.45, 0.3, 0.5, 0.6, 0.62, 0.6, 0.6, 0.58], nz: 0.05, xe: 118, arrow: true, fill: 'n', lab: [['1.1710', 0.32, 'h'], ['1.1669', 0.6, 'l']] },
    { f: 'btc', t: 'BTC/USD', hdr: 'G', pct: ['+4.94', 'g'], bv: ['72,634', '.65'], ref: 0.85, k: [0.85, 0.8, 0.85, 0.8, 0.3, 0.25, 0.3, 0.1, 0.05, 0.08, 0.05], nz: 0.06, xe: 112, arrow: true, cy: [0.04, 0.2, 0.36, 0.52, 0.68], fill: 'BG', lab: [['72949', 0.0, 'k'], ['+4%', 0.2, 'p'], ['+3%', 0.4, 'p'], ['+2%', 0.6, 'p'], ['70000', 0.8, 'n'], ['68868', 1, 'l']] },
    { f: 'us', t: '米国債10年', s: '金利', hdr: 'lg', val: ['4.708'], bp: ['+1.36', 'g'], ref: 0.85, k: [0.85, 0.88, 0.8, 0.7, 0.5, 0.1, 0.4, 0.2, 0.3, 0.2, 0.15, 0.1], nz: 0.1, xe: 112, arrow: true, cy: [0.25], fill: 'y', lab: [['4.714', 0.0, 'k'], ['4.700', 0.22, 'n'], ['4.650', 0.7, 'n'], ['4.633', 0.94, 'l']] },
  ],
  [
    { f: 'us', t: 'ゴールド', s: 'サンデー', hdr: 'y', val: ['4,519', '.79'], bp: ['-0.01', 'r'], ref: 0.3, k: [0.3, 0.4, 0.55, 0.6, 0.65, 0.6, 0.7, 0.95, 0.5, 0.05, 0.3, 0.25, 0.3, 0.3], nz: 0.12, xe: 118, arrow: true, cy: [0.72], fill: 'o', lab: [['4540', 0.02, 'h'], ['4500', 0.42, 'n'], ['-1%', 0.68, 'p'], ['4450', 0.94, 'l']] },
    { f: 'jp', t: '金先物', s: '大阪取引所', gray: true, val: ['23,600'], bp: ['+0.53', 'g'], ref: 0.6, k: [0.4, 0.6, 0.6, 0.55, 0.6, 0.65, 0.7, 0.9, 0.3, 0.1, 0.2, 0.05, 0.3], nz: 0.1, xe: 112, cy: [0.1], fill: 'gy', lab: [['23754', 0.04, 'k'], ['23500', 0.55, 'n'], ['23294', 0.94, 'l']] },
    { f: 'us', t: 'プラチナ', hdr: 'y', val: ['1,832', '.02'], bp: ['+0.78', 'g'], ref: 0.35, k: [0.3, 0.5, 0.6, 0.55, 0.6, 0.95, 0.4, 0.25, 0.2, 0.1, 0.15], nz: 0.15, xe: 118, arrow: true, cy: [0.02, 0.62, 0.92], fill: 'o', lab: [['1835', 0.02, 'h'], ['1800', 0.6, 'n'], ['1779', 0.94, 'l']] },
    { f: 'us', t: 'サンデー原油', s: 'CFD', hdr: 'lg', val: ['86', '.28'], bp: ['+2.31', 'g'], ref: 0.92, k: [0.85, 0.82, 0.85, 0.6, 0.35, 0.1, 0.3, 0.4, 0.35, 0.4, 0.4, 0.4], nz: 0.1, xe: 118, arrow: true, cy: [0.04, 0.28, 0.5, 0.72], fill: 'G', lab: [['87.68', 0.0, 'k'], ['87.00', 0.22, 'n'], ['86.00', 0.46, 'n'], ['85.00', 0.7, 'n'], ['84.25', 0.94, 'l']] },
    { f: 'us', t: 'パラジウム', val: ['1,328', '.16'], bp: ['-0.33', 'r'], ref: 0.35, k: [0.2, 0.5, 0.3, 0.6, 0.3, 0.7, 0.2, 0.9, 0.3, 0.25, 0.3, 0.2], nz: 0.22, cy: [0.25, 0.6], fill: 'o', lab: [['1336', 0.02, 'h'], ['1330', 0.26, 'n'], ['1320', 0.6, 'n'], ['1305', 0.94, 'l']] },
    { f: 'us', t: '銅', hdr: 'y', val: ['6.5682'], bp: ['-0.37', 'r'], ref: 0.25, k: [0.2, 0.25, 0.4, 0.55, 0.85, 0.6, 0.5, 0.45, 0.4, 0.35, 0.35], nz: 0.1, xe: 118, arrow: true, cy: [0.55], fill: 'o', lab: [['6.600', 0.04, 'h'], ['6.550', 0.3, 'n'], ['-1%', 0.56, 'p'], ['6.487', 0.94, 'l']] },
  ],
];

function Panel({ cards, gi }: { cards: C[]; gi: number }) {
  return (
    <div className="w-[302px] rounded-t-[12px] rounded-b-[3px] bg-linear-to-b from-[#6e6e6e] via-[#454545] to-[#3a3a3a] pt-[14px] px-[2px] pb-[2px]">
      <div className="grid grid-cols-2 gap-[2px]">
        {cards.map((c, i) => (
          <Card key={i} c={c} id={gi * 6 + i} />
        ))}
      </div>
    </div>
  );
}

export default function App() {
  return (
    <div className="w-[1233px] h-[795px] overflow-hidden bg-[#e6e6e6] font-['Liberation_Sans','Noto_Sans_CJK_JP',sans-serif] pt-[7px] pl-[4px] flex flex-col gap-[4px]">
      <div className="flex gap-[5px]">
        {groups.slice(0, 4).map((g, i) => (
          <Panel key={i} cards={g} gi={i} />
        ))}
      </div>
      <div className="flex gap-[5px]">
        {groups.slice(4).map((g, i) => (
          <Panel key={i} cards={g} gi={i + 4} />
        ))}
      </div>
    </div>
  );
}
